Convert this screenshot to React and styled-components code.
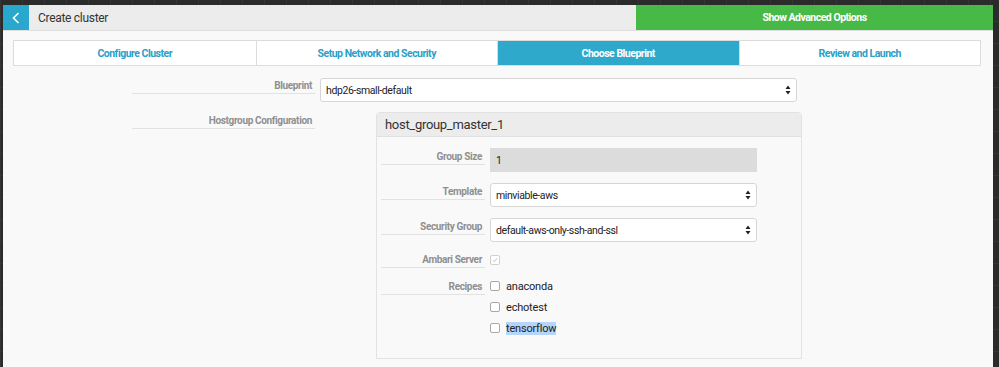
import React from "react";
import styled, { createGlobalStyle } from "styled-components";

const GlobalStyle = createGlobalStyle`
	html, body {
		margin: 0;
		height: 100%;
		background-color: #2b2b2b;
		background-image:
			linear-gradient(90deg, #353535 1px, transparent 1px),
			linear-gradient(0deg, #353535 1px, transparent 1px);
		background-size: 22px 22px;
		font-family: "Roboto", "Liberation Sans", sans-serif;
	}
	#root {
		height: 100%;
	}
`;

const Page = styled.div`
	height: 100%;
	box-sizing: border-box;
	padding: 5px 6px 0 3px;
	display: flex;
`;

const Panel = styled.main`
	flex: 1;
	background-color: #f9f9f9;
	display: flex;
	flex-direction: column;
`;

const Header = styled.header`
	display: flex;
	height: 25px;
	background-color: #ececec;
	border-bottom: 1px solid #dedede;
`;

const BackButton = styled.button`
	width: 26px;
	border: 0;
	padding: 0;
	background-color: #2aa7cc;
	display: flex;
	align-items: center;
	justify-content: center;
	cursor: pointer;
`;

const Title = styled.h1`
	flex: 1;
	margin: 0;
	padding-left: 9px;
	display: flex;
	align-items: center;
	font-size: 12px;
	letter-spacing: -0.3px;
	font-weight: 400;
	color: #333;
`;

const AdvancedButton = styled.button`
	width: 357px;
	border: 0;
	background-color: #46b946;
	color: #fff;
	font-family: inherit;
	font-size: 10.5px;
	letter-spacing: -0.5px;
	font-weight: 700;
	cursor: pointer;
`;

const Tabs = styled.nav`
	display: grid;
	grid-template-columns: repeat(4, 1fr);
	margin: 9px 12px 0 10px;
	border: 1px solid #dcdcdc;
	background-color: #fff;
`;

const Tab = styled.div`
	height: 24px;
	display: flex;
	align-items: center;
	justify-content: center;
	font-size: 10.5px;
	letter-spacing: -0.5px;
	font-weight: 700;
	color: ${({ $active }) => ($active ? "#fff" : "#2aa0c8")};
	background-color: ${({ $active }) => ($active ? "#2ea9cc" : "#fff")};
	border-left: ${({ $first }) => ($first ? "0" : "1px solid #dcdcdc")};
`;

const Form = styled.section`
	display: grid;
	grid-template-columns: 183px 477px;
	column-gap: 5px;
	row-gap: 10px;
	margin: 12px 0 0 129px;
	align-items: start;
`;

const Label = styled.label`
	display: block;
	text-align: right;
	font-size: 10px;
	letter-spacing: -0.35px;
	font-weight: 700;
	color: #8f8f8f;
	padding: 1px 3px 3px 0;
	border-bottom: 1px solid #e2e2e2;
	line-height: 9px;
	margin-top: ${({ $top }) => $top || 0}px;
`;

const SelectBox = styled.div`
	box-sizing: border-box;
	height: 24px;
	display: flex;
	align-items: center;
	justify-content: space-between;
	padding: 0 5px 0 5px;
	background-color: ${({ $disabled }) => ($disabled ? "#dcdcdc" : "#fff")};
	border: 1px solid ${({ $disabled }) => ($disabled ? "#dcdcdc" : "#d6d6d6")};
	border-radius: ${({ $disabled }) => ($disabled ? "0" : "3px")};
	font-size: 10.5px;
	letter-spacing: -0.4px;
	color: #222;
`;

const GroupPanel = styled.div`
	margin-left: 56px;
	width: 426px;
	height: 247px;
	box-sizing: border-box;
	border: 1px solid #e2e2e2;
	border-radius: 4px 4px 0 0;
	background-color: #f9f9f9;
`;

const GroupHeader = styled.div`
	height: 23px;
	display: flex;
	align-items: center;
	padding-left: 8px;
	background-color: #ececec;
	border-bottom: 1px solid #e0e0e0;
	font-size: 13px;
	letter-spacing: -0.3px;
	color: #333;
`;

const GroupBody = styled.div`
	display: grid;
	grid-template-columns: 104px 267px;
	column-gap: 5px;
	row-gap: 11px;
	padding: 11px 0 0 4px;
	align-items: start;
`;

const CheckList = styled.div`
	display: flex;
	flex-direction: column;
	gap: 7px;
`;

const CheckRow = styled.div`
	display: flex;
	align-items: center;
	gap: 6px;
	font-size: 11px;
	letter-spacing: -0.2px;
	color: #222;
	height: 14px;
`;

const Box = styled.span`
	width: 8px;
	height: 8px;
	border: 1px solid ${({ $muted }) => ($muted ? "#d0d0d0" : "#a8a8a8")};
	border-radius: 2px;
	background-color: #fff;
	display: flex;
	align-items: center;
	justify-content: center;
`;

const Selected = styled.span`
	background-color: #b5d5fb;
`;

const Arrows = () => (
	<svg width="6" height="10" viewBox="0 0 6 10">
		<path d="M3 0.5 L5.5 4 H0.5 Z M3 9.5 L5.5 6 H0.5 Z" fill="#222" />
	</svg>
);

const Select = ({ value }) => (
	<SelectBox>
		<span>{ value }</span>
		<Arrows />
	</SelectBox>
);

const Check = ({ label, selected }) => (
	<CheckRow>
		<Box />
		{ selected ? <Selected>{ label }</Selected> : <span>{ label }</span> }
	</CheckRow>
);

const tabs = ["Configure Cluster", "Setup Network and Security", "Choose Blueprint", "Review and Launch"];

const App = () => (
	<>
		<GlobalStyle />
		<Page>
			<Panel>
				<Header>
					<BackButton aria-label="Back">
						<svg width="8" height="12" viewBox="0 0 8 12">
							<path d="M6.5 1 L1.5 6 L6.5 11" fill="none" stroke="#fff" strokeWidth="1.6" />
						</svg>
					</BackButton>
					<Title>Create cluster</Title>
					<AdvancedButton>Show Advanced Options</AdvancedButton>
				</Header>
				<Tabs>
					{ tabs.map((t, i) => (
						<Tab key={ t } $first={ i === 0 } $active={ i === 2 }>{ t }</Tab>
					)) }
				</Tabs>
				<Form>
					<Label $top={ 2 }>Blueprint</Label>
					<Select value="hdp26-small-default" />
					<Label $top={ 3 }>Hostgroup Configuration</Label>
					<GroupPanel>
						<GroupHeader>host_group_master_1</GroupHeader>
						<GroupBody>
							<Label $top={ 3 }>Group Size</Label>
							<SelectBox $disabled>1</SelectBox>
							<Label $top={ 3 }>Template</Label>
							<Select value="minviable-aws" />
							<Label $top={ 3 }>Security Group</Label>
							<Select value="default-aws-only-ssh-and-ssl" />
							<Label $top={ 1 }>Ambari Server</Label>
							<CheckRow>
								<Box $muted>
									<svg width="6" height="6" viewBox="0 0 6 6">
										<path d="M1 3.2 L2.4 4.6 L5 1.2" fill="none" stroke="#bbb" strokeWidth="0.9" />
									</svg>
								</Box>
							</CheckRow>
							<Label $top={ 2 }>Recipes</Label>
							<CheckList>
								<Check label="anaconda" />
								<Check label="echotest" />
								<Check label="tensorflow" selected />
							</CheckList>
						</GroupBody>
					</GroupPanel>
				</Form>
			</Panel>
		</Page>
	</>
);

export default App;
